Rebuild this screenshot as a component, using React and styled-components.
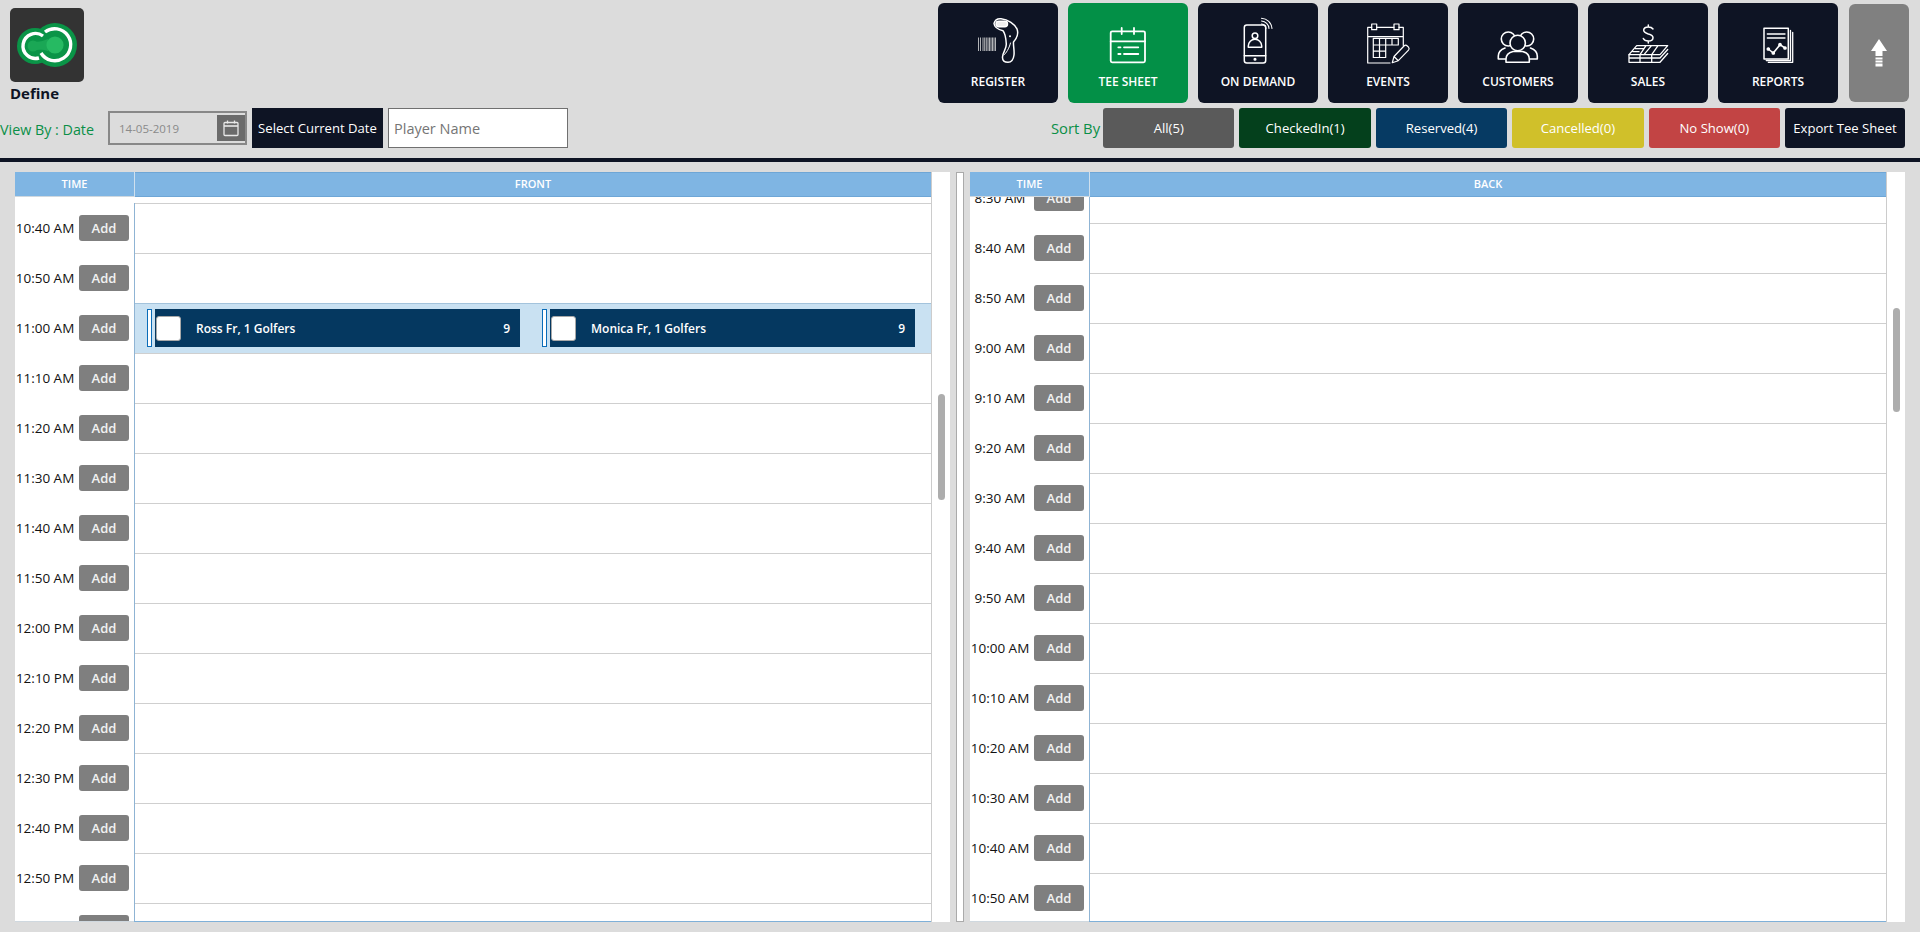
import React from 'react';
import styled, { createGlobalStyle } from 'styled-components';

const Global = createGlobalStyle`
  html, body { margin: 0; padding: 0; height: 100%; overflow: hidden; background: #dcdcdc; }
  body { font-family: "Open Sans", "Noto Sans", sans-serif; }
  * { box-sizing: border-box; }
`;

const Page = styled.div`width: 1920px; height: 932px; overflow: hidden; background: #dcdcdc;`;
const Top = styled.header`
  display: flex; justify-content: space-between; height: 162px;
  border-bottom: 4px solid #0e1424;
`;
const LeftTop = styled.div`display: flex; flex-direction: column; padding-top: 8px;`;
const LogoTile = styled.div`
  width: 74px; height: 74px; margin-left: 10px; background: #333; border-radius: 5px; overflow: hidden;
  svg { display: block; }
`;
const Brand = styled.div`
  margin: 2px 0 0 10px; height: 24px; line-height: 18px; font-size: 15px; font-weight: 700; color: #0e1424;
`;
const FilterRow = styled.div`display: flex; align-items: center; height: 40px; gap: 5px;`;
const ViewLabel = styled.div`
  width: 103px; padding-top: 3px; font-size: 14.3px; color: #0a8f47; white-space: nowrap;
`;
const DateBox = styled.div`
  width: 139px; height: 34px; border: 2px solid #888; background: #dcdcdc;
  display: flex; align-items: center; justify-content: space-between;
  padding: 0 0 0 9px; font-size: 11.5px; color: #8a8a8a;
`;
const CalButton = styled.div`
  width: 28px; height: 26px; background: #6b6b6b; display: flex; align-items: center; justify-content: center;
`;
const DarkAction = styled.div`
  width: ${p => p.$w}px; height: 40px; background: #0e1424; color: #fff; border-radius: ${p => p.$r || 0}px;
  display: flex; align-items: center; justify-content: center; font-size: 13.1px; white-space: nowrap;
`;
const NameInput = styled.input`
  width: 180px; height: 40px; background: #fff; border: 1px solid #707070; padding: 1px 5px 0;
  font: 14.5px "Open Sans", sans-serif; outline: none;
  &::placeholder { color: #757575; opacity: 1; }
`;

const RightTop = styled.div`display: flex; flex-direction: column; padding-top: 3px;`;
const Nav = styled.nav`display: flex; gap: 10px; padding-right: 11px; height: 105px;`;
const NavButton = styled.div`
  width: 120px; height: 100px; border-radius: 6px; background: ${p => p.$active ? '#039047' : '#0e1424'};
  color: #fff; display: flex; flex-direction: column; align-items: center; padding-top: 11px;
  font-size: 12px; font-weight: 600;
  svg { display: block; }
  span { margin-top: 10px; line-height: 16px; white-space: nowrap; }
`;
const UpButton = styled.div`
  width: 60px; height: 98px; margin: 1px 0 0 1px; background: #808080; border-radius: 6px;
  display: flex; align-items: center; justify-content: center;
`;
const SortRow = styled.div`display: flex; justify-content: flex-end; align-items: center; gap: 5px; padding-right: 15px; height: 40px;`;
const SortLabel = styled.div`font-size: 14.8px; color: #0a8f47; margin-right: -2px; white-space: nowrap;`;
const SortButton = styled.div`
  width: 131.4px; height: 40px; border-radius: 3px; background: ${p => p.$bg}; color: #fff; font-size: 13.1px;
  display: flex; align-items: center; justify-content: center;
`;

const Main = styled.main`display: flex; padding: 10px 0 0 15px; height: 760px;`;
const Panel = styled.section`display: flex; width: 935px; height: 750px; background: #fff;`;
const Table = styled.div`
  width: 917px; display: flex; flex-direction: column; overflow: hidden;
  border-right: 1px solid #ccc;
`;
const HeadRow = styled.div`
  display: grid; grid-template-columns: 120px 1fr; height: 25px; flex: none; background: #7fb5e3;
`;
const HeadCell = styled.div`
  display: flex; align-items: center; justify-content: center; color: #fff; font-size: 11px; font-weight: 600;
  padding-bottom: 2px;
  ${p => p.$time
    ? 'border-right: 1px solid #cfe0ee; border-bottom: 1px solid #cfd8df; padding-bottom: 1px;'
    : 'border-top: 1px solid #6ea6d6; border-bottom: 1px solid #6ea6d6;'}
`;
const Body = styled.div`flex: 1; min-height: 0; overflow: hidden; display: flex; flex-direction: column;`;
const Rows = styled.div`flex: none; margin-top: ${p => p.$shift}px;`;
const Row = styled.div`display: grid; grid-template-columns: 120px 1fr; height: 50px;`;
const FootLine = styled.div`
  flex: none; height: 1px; background: linear-gradient(to right, #cfd8df 119px, #7fb0d8 119px);
`;
const TimeCell = styled.div`
  display: flex; align-items: center; gap: 4px; border-right: 1px solid #8fb4d4;
`;
const TimeText = styled.div`
  width: 60px; text-align: center; font-size: 13.5px; color: #111; white-space: nowrap;
`;
const AddButton = styled.div`
  flex: none; width: 50px; height: 26px; margin-left: ${p => p.$peek ? '64px' : 0};
  border-radius: 3px; background: #7f7f7f; color: #f2f2f2;
  display: flex; align-items: center; justify-content: center; font-size: 13px; font-weight: 600;
`;
const SlotCell = styled.div`
  border-top: 1px solid ${p => p.$on ? '#a3c3dc' : '#cfcfcf'};
  background: ${p => p.$on ? '#c9e1f2' : '#fff'};
  display: flex; gap: 22px; padding: 5px 0 0 12px;
`;
const Booking = styled.div`display: flex; gap: 3px; height: 38px;`;
const Handle = styled.div`width: 5px; background: #fff; border: 1px solid #0a6cb8;`;
const Bar = styled.div`
  width: 365px; background: #053860; color: #fff; display: flex; align-items: center;
  padding: 0 10px 0 1px; font-size: 12px; font-weight: 600;
`;
const Check = styled.div`width: 25px; height: 25px; background: #fff; border: 1px solid #a8a8a8; border-radius: 3px; margin-right: 15px;`;
const BarName = styled.div`flex: 1;`;
const Track = styled.div`width: 18px; padding: ${p => p.$top}px 0 0 6px;`;
const Thumb = styled.div`width: 7px; height: ${p => p.$h}px; border-radius: 4px; background: #adadad;`;
const Splitter = styled.div`width: 8px; height: 750px; margin: 0 6px; background: #fff; border: 1px solid #aaa;`;

const I = ({ children, w = 1.5 }) => (
  <svg width="60" height="50" viewBox="0 0 60 50" fill="none" stroke="#fff" strokeWidth={w} strokeLinecap="round" strokeLinejoin="round">{children}</svg>
);

const Scanner = () => (
  <I>
    <path d="M26 9.5C27 6 30 4.5 33 4.8C40 5.5 47 10 49 15C50.5 19 49 24 45.5 28C45.2 32 46.5 36 46 41C45.5 45 44 48.3 40 48.3C36.5 48.3 34.3 47 34.5 43C34.8 38 38.5 35 38.3 30C38 25 37 19 35 16.7C31 15.8 26.5 14 26 9.5Z" />
    <rect x="28" y="7.3" width="11.5" height="5.4" rx="2.7" fill="#eee" />
    <circle cx="42" cy="22.3" r="1" fill="#fff" stroke="none" />
    <path d="M36 41C38 39 41 35 42.5 29" strokeWidth="1" />
    <g strokeWidth="0.8" strokeLinecap="butt" stroke="#ddd">
      <path d="M10.5 23.5V37M12.5 23.5V37M15 23.5V37M16.7 23.5V37M18.3 23.5V37M20 23.5V37M21.5 23.5V37M23 23.5V37M24.5 23.5V37M26 23.5V37M27.5 23.5V37" />
    </g>
  </I>
);
const TeeIcon = () => (
  <I w={1.8}>
    <rect x="12.7" y="17.3" width="34.3" height="31" rx="1.5" />
    <path d="M12.7 27.3H47M23.7 14V20M36 14V20M26 33.3H40.3M26 40H40.3" />
    <path d="M20.3 33.3H22.5M20.3 40H22.5" />
  </I>
);
const PhoneIcon = () => (
  <I>
    <rect x="16.3" y="11" width="21.4" height="38" rx="2.5" />
    <path d="M16.3 41.7H37.7" />
    <circle cx="27" cy="45.3" r="0.8" fill="#fff" />
    <circle cx="27" cy="21.7" r="2.8" />
    <path d="M20.3 33.3V32A6.7 6.7 0 0 1 33.7 32V33.3Z" />
    <path d="M33.5 10A5 5 0 0 1 38 14.5M33.5 7A8 8 0 0 1 41 14.5M33.5 4.2A11 11 0 0 1 44 14.5" strokeWidth="1.1" />
  </I>
);
const EventsIcon = () => (
  <I w={1.2}>
    <path d="M45.3 31.5V13.3H41M36 13.3H18.7M13.7 13.3H9.7V49H32M9.7 22.7H45.3" />
    <rect x="13.7" y="10" width="5" height="5.7" />
    <rect x="36" y="10" width="5" height="5.7" />
    <path d="M15.3 24.3H40.3V31H15.3ZM15.3 31H27.7V43.5H15.3ZM15.3 37.2H27.7M21.5 24.3V43.5M27.7 24.3V31M34 24.3V31" />
    <path d="M34.3 48.7L36 42.5L46 32C47 31 48.3 31 49.3 32L50.5 33.2C51.3 34.2 51.3 35.3 50.5 36.2L40.3 46.7ZM36 42.5L40.3 46.7" />
  </I>
);
const UsersIcon = () => (
  <I w={1.6}>
    <circle cx="20.3" cy="25" r="7" />
    <circle cx="38.7" cy="25" r="7" />
    <circle cx="29.7" cy="29" r="7.7" fill="#0e1424" />
    <path d="M17.5 45H10.3V42C10.3 38 13 35.5 17 34M41.5 45H49.3V42C49.3 38 46.5 35.5 42.5 34" />
    <path d="M18 48.3V45C18 41 21 38.5 25 37.5H34.5C38.5 38.5 41.3 41 41.3 45V48.3Z" fill="#0e1424" />
  </I>
);
const SalesIcon = () => (
  <I w={1.3}>
    <path d="M35 15C34 13.5 32.5 13 30.3 13C27.5 13 25.7 14.3 25.7 16.3C25.7 18.5 28 19.3 30.3 20C32.8 20.7 35 21.5 35 23.7C35 25.8 33 27 30.3 27C27.8 27 26 26 25.3 24.5M30.3 11V13M30.3 27V29" strokeWidth="1.5" />
    <path d="M18.7 31.7H49.7L42 40.7H11ZM17.5 34.7H26M15 37.7H21M33.5 31.7L26 40.7M28 31.7L22 40.7M40 31.7L33.7 40.7" />
    <path d="M11 40.7V44H42L49.7 35.5M11 44V48.3H42L49.7 39.5M22 40.7V48.3M33.7 40.7V48.3" />
  </I>
);
const ReportIcon = () => (
  <I w={1.3}>
    <rect x="16" y="14.3" width="24.3" height="30.7" strokeWidth="1.5" />
    <path d="M42.5 16.5V46.5H18.3M44.7 18.3V48.3H20.3" />
    <path d="M19.3 20H37M19.3 24H37" />
    <path d="M20.3 35L25.3 39L32 30.7L37 34" strokeWidth="1.6" />
    <circle cx="20.3" cy="35" r="1.2" fill="#fff" />
    <circle cx="25.3" cy="39" r="1.2" fill="#fff" />
    <circle cx="32" cy="30.7" r="1.2" fill="#fff" />
    <circle cx="37" cy="34" r="1.2" fill="#fff" />
  </I>
);

const Logo = () => (
  <svg width="74" height="74" viewBox="0 0 74 74">
    <circle cx="25" cy="38" r="18" fill="#0a9447" />
    <circle cx="45" cy="37" r="22" fill="#0a9447" />
    <path d="M33 28A12.5 12.5 0 1 0 29 50" fill="none" stroke="#fff" strokeWidth="3.4" />
    <path d="M35 24A16 16 0 1 1 31 45" fill="none" stroke="#fff" strokeWidth="3.4" />
    <circle cx="23" cy="38" r="5.5" fill="#1aa755" />
    <path d="M23 33.5C29 34.5 33 33 38 31V43C33 41.5 29 41.5 23 42.5Z" fill="#1aa755" />
    <circle cx="45" cy="37" r="8.6" fill="#26ba62" />
  </svg>
);

const rowTimes = (start, count) => {
  const out = [];
  let m = start;
  for (let i = 0; i < count; i++) {
    const h24 = Math.floor(m / 60);
    const h = h24 % 12 === 0 ? 12 : h24 % 12;
    const mm = String(m % 60).padStart(2, '0');
    out.push(`${h}:${mm} ${h24 >= 12 ? 'PM' : 'AM'}`);
    m += 10;
  }
  return out;
};

const navItems = [
  ['REGISTER', Scanner], ['TEE SHEET', TeeIcon, true], ['ON DEMAND', PhoneIcon], ['EVENTS', EventsIcon],
  ['CUSTOMERS', UsersIcon], ['SALES', SalesIcon], ['REPORTS', ReportIcon],
];
const sorts = [
  ['All(5)', '#5a5a5a'], ['CheckedIn(1)', '#04401c'], ['Reserved(4)', '#063a63'],
  ['Cancelled(0)', '#d0c02a'], ['No Show(0)', '#c24444'],
];

const TeePanel = ({ title, start, count, shift, top, h, bookings, peek }) => (
  <Panel>
    <Table>
      <HeadRow>
        <HeadCell $time>TIME</HeadCell>
        <HeadCell>{title}</HeadCell>
      </HeadRow>
      <Body>
        <Rows $shift={shift}>
          {rowTimes(start, count).map(t => {
            const list = bookings && bookings[t];
            return (
              <Row key={t}>
                <TimeCell>
                  <TimeText>{t}</TimeText>
                  <AddButton>Add</AddButton>
                </TimeCell>
                <SlotCell $on={!!list}>
                  {list && list.map(n => (
                    <Booking key={n}>
                      <Handle />
                      <Bar>
                        <Check />
                        <BarName>{n}, 1 Golfers</BarName>
                        9
                      </Bar>
                    </Booking>
                  ))}
                </SlotCell>
              </Row>
            );
          })}
          {peek && (
            <Row>
              <TimeCell><AddButton $peek /></TimeCell>
              <SlotCell />
            </Row>
          )}
        </Rows>
      </Body>
      <FootLine />
    </Table>
    <Track $top={top}><Thumb $h={h} /></Track>
  </Panel>
);

export default function App() {
  return (
    <Page>
      <Global />
      <Top>
        <LeftTop>
          <LogoTile><Logo /></LogoTile>
          <Brand>Define</Brand>
          <FilterRow>
            <ViewLabel>View By : Date</ViewLabel>
            <DateBox>
              14-05-2019
              <CalButton>
                <svg width="18" height="18" viewBox="0 0 18 18" fill="none" stroke="#e8e8e8" strokeWidth="1.3">
                  <rect x="2" y="3.5" width="14" height="13" rx="1" />
                  <path d="M2 7H16" strokeWidth="1.6" />
                  <path d="M5.5 1.5V4.5M12.5 1.5V4.5" />
                </svg>
              </CalButton>
            </DateBox>
            <DarkAction $w={131}>Select Current Date</DarkAction>
            <NameInput placeholder="Player Name" />
          </FilterRow>
        </LeftTop>
        <RightTop>
          <Nav>
            {navItems.map(([label, Icon, active]) => (
              <NavButton key={label} $active={active}>
                <Icon />
                <span>{label}</span>
              </NavButton>
            ))}
            <UpButton>
              <svg width="18" height="30" viewBox="0 0 18 30" fill="#fff">
                <path d="M9 1L17 13H12.5V18H5.5V13H1Z" />
                <rect x="5.5" y="19.5" width="7" height="2" />
                <rect x="5.5" y="22.5" width="7" height="2" />
                <rect x="5.5" y="25.5" width="7" height="3" />
              </svg>
            </UpButton>
          </Nav>
          <SortRow>
            <SortLabel>Sort By</SortLabel>
            {sorts.map(([label, bg]) => <SortButton key={label} $bg={bg}>{label}</SortButton>)}
            <DarkAction $w={120} $r={3}>Export Tee Sheet</DarkAction>
          </SortRow>
        </RightTop>
      </Top>
      <Main>
        <TeePanel title="FRONT" start={640} count={14} shift={6} top={222} h={106} peek
          bookings={{ '11:00 AM': ['Ross Fr', 'Monica Fr'] }} />
        <Splitter />
        <TeePanel title="BACK" start={510} count={15} shift={-24} top={136} h={104} />
      </Main>
    </Page>
  );
}
